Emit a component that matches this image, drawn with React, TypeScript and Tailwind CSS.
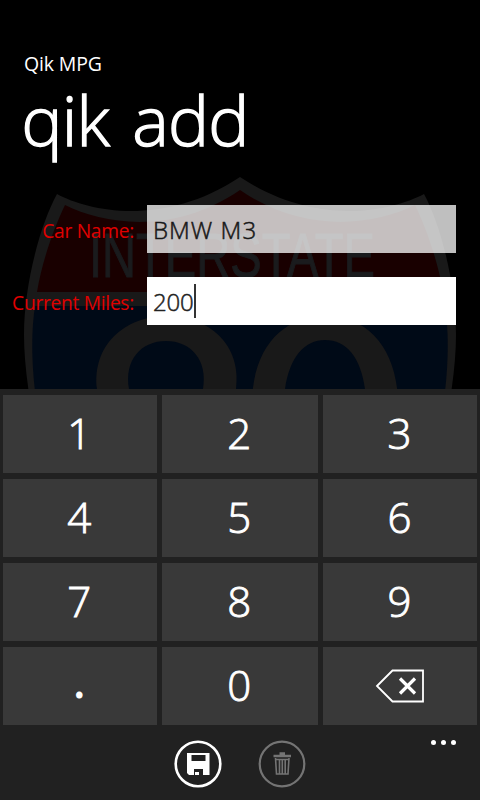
import type { ReactNode } from "react";

function Shield() {
  return (
    <svg
      className="pointer-events-none absolute inset-0"
      width="480"
      height="389"
      viewBox="0 0 480 389"
      aria-hidden="true"
    >
      <path
        d="M57 194 C90 212 165 227 240 177 C315 227 390 212 424 194 C441 225 456 285 456 335 Q456 362 450 400 H30 Q24 362 24 335 C24 285 40 225 57 194Z"
        fill="#191919"
      />
      <path
        d="M65 205 C105 225 175 235 240 190 C305 235 375 225 415 205 C427 230 438 262 443 292 H37 C42 262 53 230 65 205Z"
        fill="#190000"
      />
      <path d="M35 306 H445 Q451 345 444 400 H36 Q29 345 35 306Z" fill="#000a17" />
      <text
        x="89"
        y="277"
        textLength="286"
        lengthAdjust="spacingAndGlyphs"
        fontSize="63"
        fill="#1a1b1d"
        stroke="#1a1b1d"
        className="font-['Liberation_Sans',sans-serif]"
      >
        INTERSTATE
      </text>
      <path
        fillRule="evenodd"
        fill="#191919"
        d="M97 389 C92 345 125 316 167 316 C209 316 242 345 236 389Z M129 389 C124 360 141 341 166 341 C191 341 208 360 203 389Z"
      />
      <path
        fillRule="evenodd"
        fill="#191919"
        d="M252 400 C254 345 285 316 325 316 C368 316 396 348 398 400Z M284 400 C286 362 302 340 325 340 C349 340 364 362 366 400Z"
      />
    </svg>
  );
}

function Key({ children }: { children: ReactNode }) {
  return (
    <button className="flex items-center justify-center bg-[#393939] pr-px pb-[3px] text-[42px] leading-none font-light text-white [-webkit-text-stroke:0.9px_white]">
      {children}
    </button>
  );
}

function Label({ children }: { children: ReactNode }) {
  return (
    <div className="w-[134px] shrink-0 pt-[5px] text-right text-[19.2px] tracking-[-0.28px] whitespace-nowrap text-[#e00000]">
      {children}
    </div>
  );
}

export default function App() {
  return (
    <div className="flex h-[800px] w-[480px] flex-col overflow-hidden bg-black font-['Open_Sans','Noto_Sans',sans-serif]">
      <main className="relative h-[389px] shrink-0 overflow-hidden">
        <Shield />
        <div className="relative">
          <div className="pt-[50px] pl-6 text-[19.5px] leading-7 tracking-[-0.15px] text-white">Qik MPG</div>
          <h1 className="mt-[-1px] h-[128px] pl-[21.5px] text-[69px] leading-[84px] font-light tracking-[-0.8px] text-white [-webkit-text-stroke:1.3px_white] [word-spacing:6px]">
            qik add
          </h1>
          <div className="flex h-12 items-center gap-[13px]">
            <Label>Car Name:</Label>
            <div className="flex h-12 w-[309px] items-center bg-white/75 pt-0.5 pl-1.5 text-[24px] font-light tracking-[1.05px] text-[#171717] [-webkit-text-stroke:0.5px_#171717]">
              BMW M3
            </div>
          </div>
          <div className="mt-6 flex h-12 items-center gap-[13px]">
            <Label>Current Miles:</Label>
            <div className="flex h-12 w-[309px] items-center bg-white pl-1.5 text-[24px] font-light text-[#222] [-webkit-text-stroke:0.5px_#222]">
              <span className="w-[41px] pt-0.5 tracking-[-0.2px]">200</span>
              <span className="h-[34px] w-0.5 bg-[#333]" />
            </div>
          </div>
        </div>
      </main>
      <section className="grid h-[336px] shrink-0 grid-cols-[153.5px_155.5px_154px] grid-rows-[78px_78px_78px_78px] gap-x-[5.5px] gap-y-[6px] bg-[#212121] pt-[6px] pl-[3px]">
        <Key>1</Key>
        <Key>2</Key>
        <Key>3</Key>
        <Key>4</Key>
        <Key>5</Key>
        <Key>6</Key>
        <Key>7</Key>
        <Key>8</Key>
        <Key>9</Key>
        <Key>
          <span className="pb-2 [-webkit-text-stroke:3.2px_white]">.</span>
        </Key>
        <Key>0</Key>
        <Key>
          <svg className="mt-[3px] ml-px" width="50" height="34" viewBox="0 0 50 34" fill="none" stroke="white">
            <path d="M2 17 L17.500 1.500 H48 V32.500 H17.500Z" strokeWidth="1.800" />
            <path d="M25 9.500 L40 24.500 M40 9.500 L25 24.500" strokeWidth="3.200" />
          </svg>
        </Key>
      </section>
      <footer className="flex flex-1 bg-[#212121] pl-[174px]">
        <svg className="mt-[15px]" width="48" height="48" viewBox="0 0 48 48">
          <circle cx="24" cy="24" r="22.300" fill="none" stroke="white" strokeWidth="2.600" />
          <path
            fillRule="evenodd"
            fill="white"
            d="M13 13 H35.500 V35 H15 L13 33Z M17.500 15 V21 H31.500 V15Z M20 29 V35 H29 V29Z"
          />
          <rect x="21" y="32" width="4" height="3" fill="white" />
        </svg>
        <svg className="mt-[15px] ml-9" width="48" height="48" viewBox="0 0 48 48" fill="none" stroke="#747474">
          <circle cx="24" cy="24" r="22.300" strokeWidth="2.200" />
          <path d="M15.500 16 H33 M21.500 13.500 H27" strokeWidth="2.600" />
          <path d="M17.500 18 L18.500 34 H30 L31 18 M18 19.500 H30.500 M21.500 19 V34 M24.300 19 V34 M27.200 19 V34" strokeWidth="1.600" />
        </svg>
        <div className="mt-[15px] ml-[125px] flex h-[5px] gap-[5px]">
          <i className="size-[5px] rounded-full bg-white" />
          <i className="size-[5px] rounded-full bg-white" />
          <i className="size-[5px] rounded-full bg-white" />
        </div>
      </footer>
    </div>
  );
}
